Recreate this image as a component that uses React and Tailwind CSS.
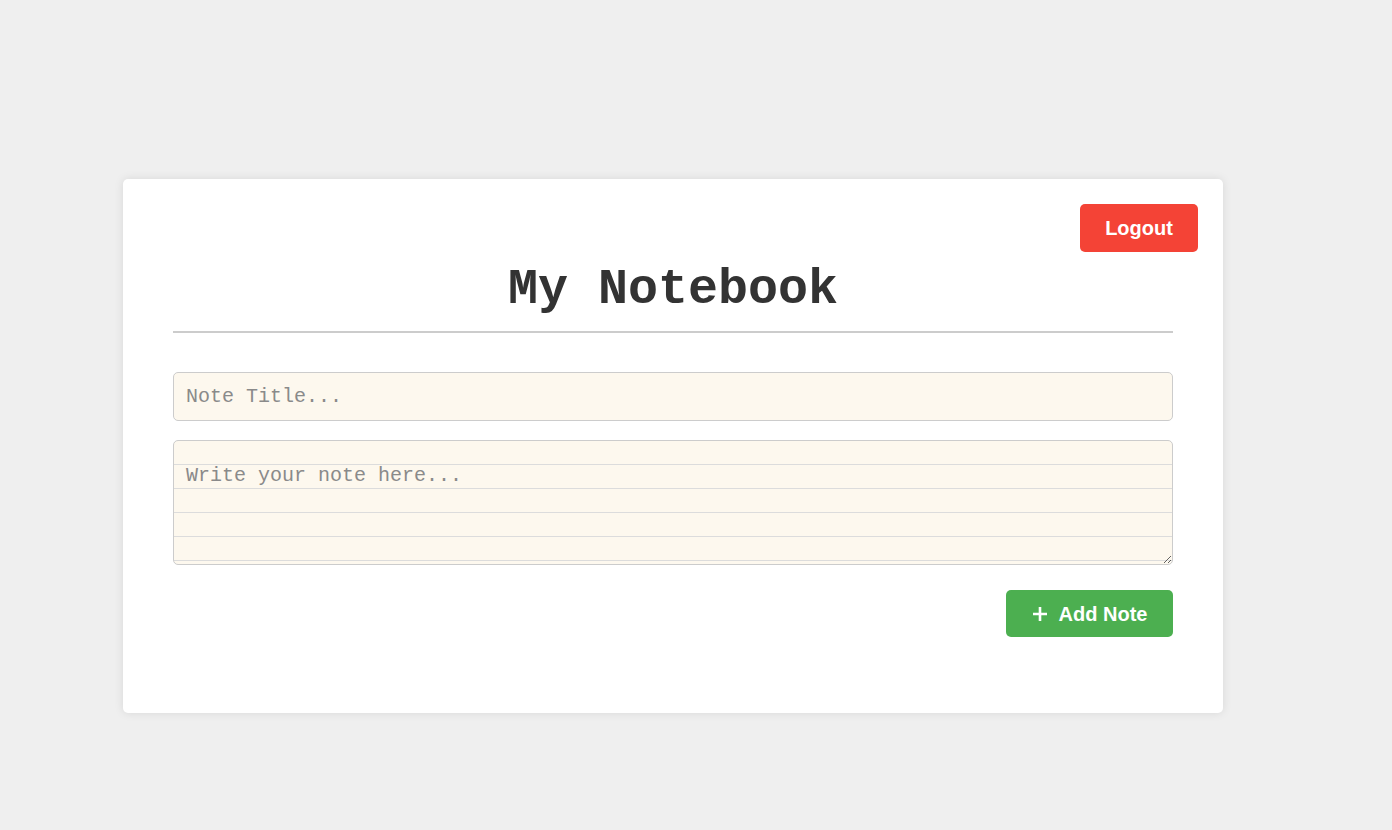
import { useState } from "react";

function PlusIcon() {
  return (
    <svg width="16" height="16" viewBox="0 0 16 16" className="shrink-0">
      <path d="M8 1v14M1 8h14" stroke="white" strokeWidth="2.6" strokeLinecap="butt" />
    </svg>
  );
}

export default function App() {
  const [title, setTitle] = useState("");
  const [body, setBody] = useState("");

  return (
    <main className="min-h-[830px] w-full bg-[#efefef] pt-[179px] pl-[123px]">
      <section className="relative w-[1100px] h-[534px] rounded-[5px] bg-white px-[50px] pt-[84px] shadow-[0_0_10px_rgba(0,0,0,0.1)]">
        <button
          type="button"
          className="absolute top-[25px] right-[25px] h-[48px] w-[118px] rounded-[5px] bg-[#f44336] text-[20px] font-bold text-white font-['Liberation_Sans',Arial,sans-serif]"
        >
          Logout
        </button>

        <h1 className="border-b-2 border-[#ccc] pb-[14px] text-center text-[50px] leading-[54px] font-bold text-[#333] font-['Liberation_Mono','Courier_New',monospace]">
          My Notebook
        </h1>

        <form className="mt-[39px] flex flex-col" onSubmit={(e) => e.preventDefault()}>
          <input
            value={title}
            onChange={(e) => setTitle(e.target.value)}
            placeholder="Note Title..."
            className="h-[49px] w-full rounded-[5px] border border-[#ccc] bg-[#fdf8ee] px-[12px] text-[20px] text-[#333] outline-none placeholder:text-[#8a8a8a] font-['Liberation_Mono','Courier_New',monospace]"
          />
          <textarea
            value={body}
            onChange={(e) => setBody(e.target.value)}
            placeholder="Write your note here..."
            className="mt-[19px] h-[125px] w-full rounded-[5px] border border-[#ccc] bg-[#fdf8ee] bg-[linear-gradient(transparent_23px,#dcdcdc_23px,#dcdcdc_24px)] bg-[length:100%_24px] px-[12px] pt-[23px] text-[20px] leading-[24px] text-[#333] outline-none placeholder:text-[#8a8a8a] font-['Liberation_Mono','Courier_New',monospace]"
          />
          <div className="mt-[25px] flex justify-end">
            <button
              type="submit"
              className="flex h-[47px] w-[167px] items-center justify-center gap-[11px] rounded-[5px] bg-[#4caf50] text-[20px] font-bold text-white font-['Liberation_Sans',Arial,sans-serif]"
            >
              <PlusIcon />
              Add Note
            </button>
          </div>
        </form>
      </section>
    </main>
  );
}
